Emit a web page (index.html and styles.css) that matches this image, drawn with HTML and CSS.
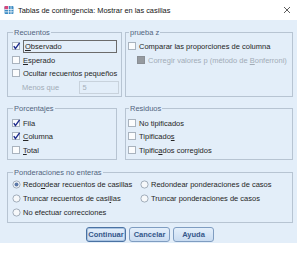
FILE: index.html
```html
<!DOCTYPE html>
<html lang="es">

<head>
    <meta charset="UTF-8">
    <title>Tablas de contingencia: Mostrar en las casillas</title>
    <link rel="stylesheet" href="styles.css">
</head>

<body>
    <div class="window">
        <!-- Title bar -->
        <div class="titlebar">
            <svg class="app-icon" viewBox="0 0 10 10">
                <rect x="0.5" y="1" width="9" height="8" rx="1" fill="#3d8cc4"/>
                <rect x="0.5" y="1" width="4" height="3.5" rx="1" fill="#d9467a"/>
                <path d="M0.5 4.5H9.5M0.5 6.8H9.5M4.5 1V9M7 1V9" stroke="#fff" stroke-width="0.7"/>
            </svg>
            <span class="title">Tablas de contingencia: Mostrar en las casillas</span>
            <svg class="close" viewBox="0 0 8 8">
                <path d="M1 1L7 7M7 1L1 7" stroke="#333" stroke-width="0.8"/>
            </svg>
        </div>

        <div class="dialog">
            <!-- Recuentos / prueba z -->
            <div class="row row-top">
                <fieldset class="group group-left">
                    <legend>Recuentos</legend>
                    <div class="check">
                        <svg class="box" viewBox="0 0 9 9"><rect x="0.5" y="0.5" width="7" height="7" class="box-bg"/><path d="M1.8 4.2L3.4 6.6L7.6 0.8" class="tick"/></svg>
                        <span class="focus"><u>O</u>bservado</span>
                    </div>
                    <div class="check">
                        <svg class="box" viewBox="0 0 9 9"><rect x="0.5" y="0.5" width="7" height="7" class="box-bg"/></svg>
                        <span><u>E</u>sperado</span>
                    </div>
                    <div class="check">
                        <svg class="box" viewBox="0 0 9 9"><rect x="0.5" y="0.5" width="7" height="7" class="box-bg"/></svg>
                        <span>Ocultar recuentos pequeños</span>
                    </div>
                    <div class="check menos">
                        <span class="menos-label disabled">Menos que</span>
                        <span class="field">5</span>
                    </div>
                </fieldset>

                <fieldset class="group group-right">
                    <legend>prueba z</legend>
                    <div class="check">
                        <svg class="box" viewBox="0 0 9 9"><rect x="0.5" y="0.5" width="7" height="7" class="box-bg"/></svg>
                        <span>Comparar las proporciones de columna</span>
                    </div>
                    <div class="check sub">
                        <svg class="box" viewBox="0 0 9 9"><rect x="0.5" y="0.5" width="7" height="7" class="box-off"/></svg>
                        <span class="disabled">Corregir valores p (método de <u>B</u>onferroni)</span>
                    </div>
                </fieldset>
            </div>

            <!-- Porcentajes / Residuos -->
            <div class="row row-mid">
                <fieldset class="group group-left">
                    <legend>Porcentajes</legend>
                    <div class="check">
                        <svg class="box" viewBox="0 0 9 9"><rect x="0.5" y="0.5" width="7" height="7" class="box-bg"/><path d="M1.8 4.2L3.4 6.6L7.6 0.8" class="tick"/></svg>
                        <span>Fila</span>
                    </div>
                    <div class="check">
                        <svg class="box" viewBox="0 0 9 9"><rect x="0.5" y="0.5" width="7" height="7" class="box-bg"/><path d="M1.8 4.2L3.4 6.6L7.6 0.8" class="tick"/></svg>
                        <span><u>C</u>olumna</span>
                    </div>
                    <div class="check">
                        <svg class="box" viewBox="0 0 9 9"><rect x="0.5" y="0.5" width="7" height="7" class="box-bg"/></svg>
                        <span><u>T</u>otal</span>
                    </div>
                </fieldset>

                <fieldset class="group group-right">
                    <legend>Residuos</legend>
                    <div class="check">
                        <svg class="box" viewBox="0 0 9 9"><rect x="0.5" y="0.5" width="7" height="7" class="box-bg"/></svg>
                        <span>No tipificados</span>
                    </div>
                    <div class="check">
                        <svg class="box" viewBox="0 0 9 9"><rect x="0.5" y="0.5" width="7" height="7" class="box-bg"/></svg>
                        <span>Tipificado<u>s</u></span>
                    </div>
                    <div class="check">
                        <svg class="box" viewBox="0 0 9 9"><rect x="0.5" y="0.5" width="7" height="7" class="box-bg"/></svg>
                        <span>Tipific<u>a</u>dos corregidos</span>
                    </div>
                </fieldset>
            </div>

            <!-- Ponderaciones no enteras -->
            <fieldset class="group group-wide">
                <legend>Ponderaciones no enteras</legend>
                <div class="radios">
                    <div class="check">
                        <svg class="radio" viewBox="0 0 9 9"><circle cx="4.5" cy="4.5" r="3.6" class="radio-bg"/><circle cx="4.5" cy="4.5" r="2" class="dot"/></svg>
                        <span>Redo<u>n</u>dear recuentos de casillas</span>
                    </div>
                    <div class="check">
                        <svg class="radio" viewBox="0 0 9 9"><circle cx="4.5" cy="4.5" r="3.6" class="radio-bg"/></svg>
                        <span>Redondear ponderaciones de casos</span>
                    </div>
                    <div class="check">
                        <svg class="radio" viewBox="0 0 9 9"><circle cx="4.5" cy="4.5" r="3.6" class="radio-bg"/></svg>
                        <span>Truncar recuentos de casi<u>l</u>las</span>
                    </div>
                    <div class="check">
                        <svg class="radio" viewBox="0 0 9 9"><circle cx="4.5" cy="4.5" r="3.6" class="radio-bg"/></svg>
                        <span>Truncar ponderaciones de casos</span>
                    </div>
                    <div class="check">
                        <svg class="radio" viewBox="0 0 9 9"><circle cx="4.5" cy="4.5" r="3.6" class="radio-bg"/></svg>
                        <span>No efectuar correcciones</span>
                    </div>
                </div>
            </fieldset>

            <!-- Buttons -->
            <div class="buttons">
                <button class="btn btn-default">Continuar</button>
                <button class="btn">Cancelar</button>
                <button class="btn">Ayuda</button>
            </div>
        </div>
    </div>
</body>

</html>
```
FILE: styles.css
```css
body {
    margin: 0;
    background: #ffffff;
    font-family: "Liberation Sans", Arial, sans-serif;
    font-size: 7.5px;
    color: #262626;
}

.window {
    width: 297px;
}

.titlebar {
    height: 20px;
    display: flex;
    align-items: center;
    padding: 0 4px 0 4px;
    box-sizing: border-box;
    background: #ffffff;
}

.app-icon {
    width: 10px;
    height: 10px;
    margin-right: 4px;
}

.title {
    flex: 1;
    font-size: 7.4px;
    color: #151515;
}

.close {
    width: 8px;
    height: 8px;
    margin-right: 2px;
}

.dialog {
    height: 223px;
    box-sizing: border-box;
    background: #e3eef9;
    padding: 8px 4px 0 7px;
    display: flex;
    flex-direction: column;
}

.row {
    display: grid;
}

.row-top {
    grid-template-columns: 115px 1fr;
    gap: 3px;
}

.row-mid {
    grid-template-columns: 110px 1fr;
    gap: 8px;
    margin-top: 7px;
}

.group {
    margin: 0;
    min-width: 0;
    border: 1px solid #b7c4d2;
    padding: 3px 2px 2px 4px;
}

.group-right {
    padding-left: 2px;
}

.group legend {
    padding: 0 1px;
    margin-left: 1px;
    line-height: 9px;
    color: #52657e;
}

.group-wide {
    margin-top: 8px;
    padding-top: 1px;
    padding-bottom: 3px;
}

.check {
    height: 13.6px;
    display: flex;
    align-items: center;
    white-space: nowrap;
}

.box,
.radio {
    width: 9px;
    height: 9px;
    flex: none;
    margin-right: 2px;
}

.box-bg {
    fill: #fbfcfd;
    stroke: #a9b3be;
    stroke-width: 1;
}

.box-off {
    fill: #969a9f;
    stroke: #8a8f95;
    stroke-width: 1;
}

.tick {
    fill: none;
    stroke: #1b2a8c;
    stroke-width: 1.4;
}

.radio-bg {
    fill: #f6f8fa;
    stroke: #9aa6b3;
    stroke-width: 0.9;
}

.dot {
    fill: #5a78a8;
}

.focus {
    flex: 1;
    margin-right: 2px;
    padding: 0 1px;
    line-height: 11px;
    border: 1px solid #6b6b6b;
}

.sub {
    padding-left: 9px;
}

.disabled {
    color: #a2acb7;
}

.menos-label {
    width: 58px;
    padding-left: 10px;
}

.field {
    width: 36px;
    height: 11px;
    line-height: 11px;
    padding-left: 2px;
    border: 1px solid #c8d2dc;
    color: #a7b0ba;
}

.radios {
    display: grid;
    grid-template-columns: 128px 1fr;
}

.buttons {
    display: flex;
    justify-content: center;
    gap: 3px;
    margin-top: 4px;
}

.btn {
    width: 41px;
    height: 15px;
    padding: 0;
    font-family: inherit;
    font-size: 7.5px;
    font-weight: bold;
    color: #34578a;
    background: linear-gradient(#e4effb, #c9dcf1);
    border: 1px solid #7f9dc1;
    border-radius: 3px;
}

.btn-default {
    width: 40px;
    border-color: #4a72a3;
    box-shadow: inset 0 0 0 1px #a9c3e1;
}
```
